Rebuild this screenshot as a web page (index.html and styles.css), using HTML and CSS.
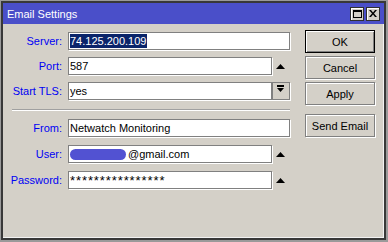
FILE: index.html
```html
<!DOCTYPE html>
<html>
<head>
<meta charset="utf-8">
<link rel="stylesheet" href="styles.css">
</head>
<body>
<div class="window">
  <div class="titlebar">
    <span class="title">Email Settings</span>
    <div class="tbtns">
      <span class="tbtn"><svg width="9" height="8" viewBox="0 0 9 8"><path d="M0 0H9V8H0Z M1 2V7H8V2Z" fill="#000" fill-rule="evenodd"/></svg></span>
      <span class="tbtn"><svg width="8" height="7" viewBox="0 0 8 7"><path d="M0 0H2L4 2.5L6 0H8L5 3.5L8 7H6L4 4.5L2 7H0L3 3.5Z" fill="#000"/></svg></span>
    </div>
  </div>
  <div class="content">
    <div class="form">
      <div class="row">
        <span class="lbl">Server:</span>
        <div class="field wide"><span class="sel">74.125.200.109</span></div>
      </div>
      <div class="row">
        <span class="lbl">Port:</span>
        <div class="field">587</div>
        <span class="arrow"><svg width="9" height="5" viewBox="0 0 9 5"><path d="M4.5 0L9 5H0Z" fill="#000"/></svg></span>
      </div>
      <div class="row">
        <span class="lbl">Start TLS:</span>
        <div class="field">yes</div>
        <span class="dd"><svg width="7" height="7" viewBox="0 0 7 7"><path d="M0 0H7V2H0Z M0 3H7L3.5 7Z" fill="#000"/></svg></span>
      </div>
      <div class="sep"></div>
      <div class="row r2">
        <span class="lbl">From:</span>
        <div class="field wide">Netwatch Monitoring</div>
      </div>
      <div class="row r2">
        <span class="lbl">User:</span>
        <div class="field"><span class="blob"></span>@gmail.com</div>
        <span class="arrow"><svg width="9" height="5" viewBox="0 0 9 5"><path d="M4.5 0L9 5H0Z" fill="#000"/></svg></span>
      </div>
      <div class="row r2">
        <span class="lbl">Password:</span>
        <div class="field"><span class="pw">****************</span></div>
        <span class="arrow"><svg width="9" height="5" viewBox="0 0 9 5"><path d="M4.5 0L9 5H0Z" fill="#000"/></svg></span>
      </div>
    </div>
    <div class="buttons">
      <div class="btn default">OK</div>
      <div class="btn">Cancel</div>
      <div class="btn">Apply</div>
      <div class="btn send">Send Email</div>
    </div>
  </div>
</div>
</body>
</html>
```

FILE: styles.css
```css
html, body {
  margin: 0;
  padding: 0;
}
body {
  width: 388px;
  height: 242px;
  background: #9a9a9a;
  font-family: "Liberation Sans", Arial, sans-serif;
  font-size: 11px;
  color: #000;
  overflow: hidden;
}
.window {
  box-sizing: border-box;
  margin: 1px 0 0 1px;
  width: 385px;
  height: 239px;
  border: 2px solid #383838;
  display: flex;
  flex-direction: column;
}
.titlebar {
  height: 21px;
  flex: none;
  background: #4a4fc9;
  display: flex;
  align-items: center;
  justify-content: space-between;
  padding: 0 4px 0 4px;
}
.title {
  color: #fff;
  font-size: 11px;
  line-height: 14px;
}
.tbtns {
  display: flex;
  gap: 2px;
}
.tbtn {
  box-sizing: border-box;
  width: 14px;
  height: 14px;
  background: #d4d0c8;
  border: 1px solid #303030;
  box-shadow: inset 1px 1px 0 #fff;
  display: flex;
  align-items: center;
  justify-content: center;
}
.content {
  flex: 1;
  background: #d4d0c8;
  border-right: 1px solid #f2f2f2;
  border-bottom: 1px solid #f2f2f2;
  display: flex;
}
.form {
  padding-top: 8px;
  display: flex;
  flex-direction: column;
  gap: 7px;
}
.row {
  display: grid;
  grid-template-columns: 65px 204px 18px;
  height: 18px;
  align-items: center;
}
.r2 {
  margin-top: 1px;
}
.lbl {
  color: #0000f4;
  text-align: right;
  padding-right: 6px;
  line-height: 14px;
}
.field {
  box-sizing: border-box;
  height: 18px;
  background: #fff;
  border: 1px solid #808080;
  box-shadow: 1px 1px 0 #fff;
  padding: 0 1px;
  line-height: 16px;
  white-space: nowrap;
  overflow: hidden;
}
.wide {
  grid-column: 2 / span 2;
}
.sel {
  display: inline-block;
  background: #0a246a;
  color: #fff;
  line-height: 14px;
  padding: 0 1px 0 0;
  vertical-align: top;
  margin-top: 1px;
}
.pw {
  font-size: 13px;
  letter-spacing: 0.9px;
  line-height: 16px;
  display: inline-block;
  vertical-align: top;
  margin-top: 1px;
}
.arrow {
  display: flex;
  align-items: center;
  padding-left: 4px;
  height: 18px;
}
.dd {
  box-sizing: border-box;
  height: 18px;
  width: 18px;
  border: 1px solid #808080;
  box-shadow: 1px 1px 0 #fff;
  background: #d4d0c8;
}
.dd svg {
  display: block;
  margin: 2px 0 0 4px;
}
.sep {
  margin: 2px 0 0 9px;
  width: 278px;
  height: 1px;
  background: #a0a0a0;
  border-bottom: 1px solid #fff;
}
.blob {
  display: inline-block;
  width: 56px;
  height: 11px;
  border-radius: 6px;
  background: #5252d2;
  vertical-align: middle;
  margin: -2px 2px 0 0;
}
.buttons {
  margin-left: 15px;
  padding-top: 6px;
  display: flex;
  flex-direction: column;
  gap: 3px;
}
.btn {
  box-sizing: border-box;
  width: 70px;
  height: 23px;
  border: 1px solid #808080;
  box-shadow: inset 1px 1px 0 #fff, 1px 1px 0 #fff;
  display: flex;
  align-items: center;
  justify-content: center;
  background: #d4d0c8;
}
.default {
  border-color: #000;
  box-shadow: inset 1px 1px 0 #fff, inset -1px -1px 0 #808080;
}
.send {
  margin-top: 6px;
}
```
